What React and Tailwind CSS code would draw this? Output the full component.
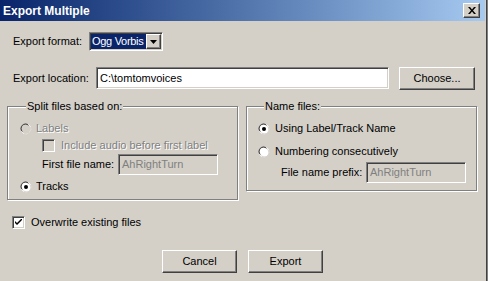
import React from "react";

const sunken =
  "border border-t-[#808080] border-l-[#808080] border-r-white border-b-white shadow-[inset_1px_1px_0_#404040,inset_-1px_-1px_0_#d4d0c8]";
const raised =
  "border border-t-white border-l-white border-r-[#404040] border-b-[#404040] shadow-[inset_-1px_-1px_0_#808080,inset_1px_1px_0_#d4d0c8]";
const disabledText = "text-[#808080] [text-shadow:1px_1px_0_#fff]";

const Radio = ({ checked, disabled }) => (
  <svg width="12" height="12" viewBox="0 0 12 12" className="shrink-0">
    <path d="M8 1.5A5 5 0 0 0 1.5 8" stroke="#808080" fill="none" />
    <path d="M8 1.5A5 5 0 0 1 10.5 4 M10.5 4 A5 5 0 0 1 4 10.5 M4 10.5 A5 5 0 0 1 1.5 8" stroke="#fff" fill="none" />
    <circle cx="6" cy="6" r="4.5" fill={disabled ? "#d4d0c8" : "#fff"} stroke="none" />
    <path d="M8.5 2.3A4.3 4.3 0 0 0 2.3 8.5" stroke="#404040" fill="none" />
    <path d="M9.7 3.5A4.3 4.3 0 0 1 3.5 9.7" stroke="#d4d0c8" fill="none" />
    {checked && <circle cx="6" cy="6" r="2" fill="#000" />}
  </svg>
);

const Checkbox = ({ checked, disabled }) => (
  <div
    className={`w-[13px] h-[13px] shrink-0 flex items-center justify-center ${sunken} ${
      disabled ? "bg-[#d4d0c8]" : "bg-white"
    }`}
  >
    {checked && (
      <svg width="7" height="7" viewBox="0 0 7 7">
        <path d="M0 2 L2 4 L7 -1 L7 1 L2 6 L0 4 Z" fill="#000" />
      </svg>
    )}
  </div>
);

const Button = ({ children, className = "" }) => (
  <div
    className={`h-[23px] flex items-center justify-center bg-[#d4d0c8] text-black ${raised} ${className}`}
  >
    {children}
  </div>
);

const TextBox = ({ value, disabled, className = "" }) => (
  <div
    className={`h-[21px] flex items-center px-[3px] whitespace-nowrap ${sunken} ${
      disabled ? "bg-[#d4d0c8] text-[#808080]" : "bg-white text-black"
    } ${className}`}
  >
    {value}
  </div>
);

const Group = ({ title, className = "", children }) => (
  <fieldset
    className={`border border-[#808080] shadow-[inset_1px_1px_0_#fff,1px_1px_0_#fff] ${className}`}
  >
    <legend className="ml-[6px] px-[1px] bg-[#d4d0c8] leading-[13px]">{title}</legend>
    {children}
  </fieldset>
);

export default function App() {
  return (
    <div className="flex w-[489px] h-[281px] overflow-hidden bg-white font-['Liberation_Sans',Arial,sans-serif] text-[11px] text-black">
      <div className="w-[485px] flex flex-col bg-[#d4d0c8]">
        <div className="h-[21px] shrink-0 flex items-center justify-between pl-[3px] pr-[5px] bg-gradient-to-r from-[#0a246a] to-[#a6caf0]">
          <span className="text-white font-bold text-[12px]">Export Multiple</span>
          <div className={`w-[17px] h-[15px] flex items-center justify-center bg-[#d4d0c8] ${raised}`}>
            <svg width="8" height="7" viewBox="0 0 8 7">
              <path d="M0 0 L2 0 L4 2.5 L6 0 L8 0 L5 3.5 L8 7 L6 7 L4 4.5 L2 7 L0 7 L3 3.5 Z" fill="#000" />
            </svg>
          </div>
        </div>

        <div className="flex flex-col px-[7px]">
          <div className="mt-[11px] pl-[6px] flex items-center h-[19px]">
            <span className="w-[76px]">Export format:</span>
            <div className={`w-[74px] h-[19px] flex items-center p-[1px] bg-white ${sunken}`}>
              <div className="flex-1 min-w-0 h-full flex items-center bg-[#0a246a] text-white pl-[1px] tracking-[-0.3px] whitespace-nowrap">
                Ogg Vorbis
              </div>
              <div className={`w-[15px] h-[15px] shrink-0 flex items-center justify-center bg-[#d4d0c8] ${raised}`}>
                <svg width="7" height="4" viewBox="0 0 7 4">
                  <path d="M0 0 L7 0 L3.5 4 Z" fill="#000" />
                </svg>
              </div>
            </div>
          </div>

          <div className="mt-[16px] pl-[6px] flex items-center h-[22px]">
            <span className="w-[83px]">Export location:</span>
            <TextBox value="C:\tomtomvoices" className="w-[293px] h-[22px]" />
            <Button className="ml-[10px] w-[76px]">Choose...</Button>
          </div>

          <div className="mt-[11px] flex items-start gap-[8px]">
            <Group title="Split files based on:" className="w-[231px] h-[100px] pl-[12px]">
              <div className={`mt-[9px] flex items-center gap-[4px] h-[13px] ${disabledText}`}>
                <Radio disabled />
                <span>Labels</span>
              </div>
              <div className={`mt-[4px] ml-[22px] flex items-center gap-[6px] h-[13px] ${disabledText}`}>
                <Checkbox disabled />
                <span>Include audio before first label</span>
              </div>
              <div className="mt-[2px] ml-[22px] flex items-center h-[21px]">
                <span className="w-[76px]">First file name:</span>
                <TextBox value="AhRightTurn" disabled className="w-[100px]" />
              </div>
              <div className="mt-[5px] flex items-center gap-[4px] h-[13px]">
                <Radio checked />
                <span>Tracks</span>
              </div>
            </Group>

            <Group title="Name files:" className="w-[231px] h-[91px] pl-[11px]">
              <div className="mt-[9px] flex items-center gap-[5px] h-[13px]">
                <Radio checked />
                <span>Using Label/Track Name</span>
              </div>
              <div className="mt-[10px] flex items-center gap-[5px] h-[13px]">
                <Radio />
                <span>Numbering consecutively</span>
              </div>
              <div className="mt-[4px] ml-[23px] flex items-center h-[21px]">
                <span className="w-[85px]">File name prefix:</span>
                <TextBox value="AhRightTurn" disabled className="w-[100px]" />
              </div>
            </Group>
          </div>

          <div className="mt-[16px] pl-[5px] flex items-center gap-[6px] h-[13px]">
            <Checkbox checked />
            <span>Overwrite existing files</span>
          </div>

          <div className="mt-[21px] flex justify-center gap-[11px]">
            <Button className="w-[75px]">Cancel</Button>
            <Button className="w-[75px]">Export</Button>
          </div>
        </div>
      </div>
      <div className="w-[4px] flex">
        <div className="w-[1px] bg-[#d4d0c8]" />
        <div className="w-[1px] bg-[#404040]" />
        <div className="w-[1px] bg-[#808080]" />
        <div className="w-[1px] bg-white" />
      </div>
    </div>
  );
}
